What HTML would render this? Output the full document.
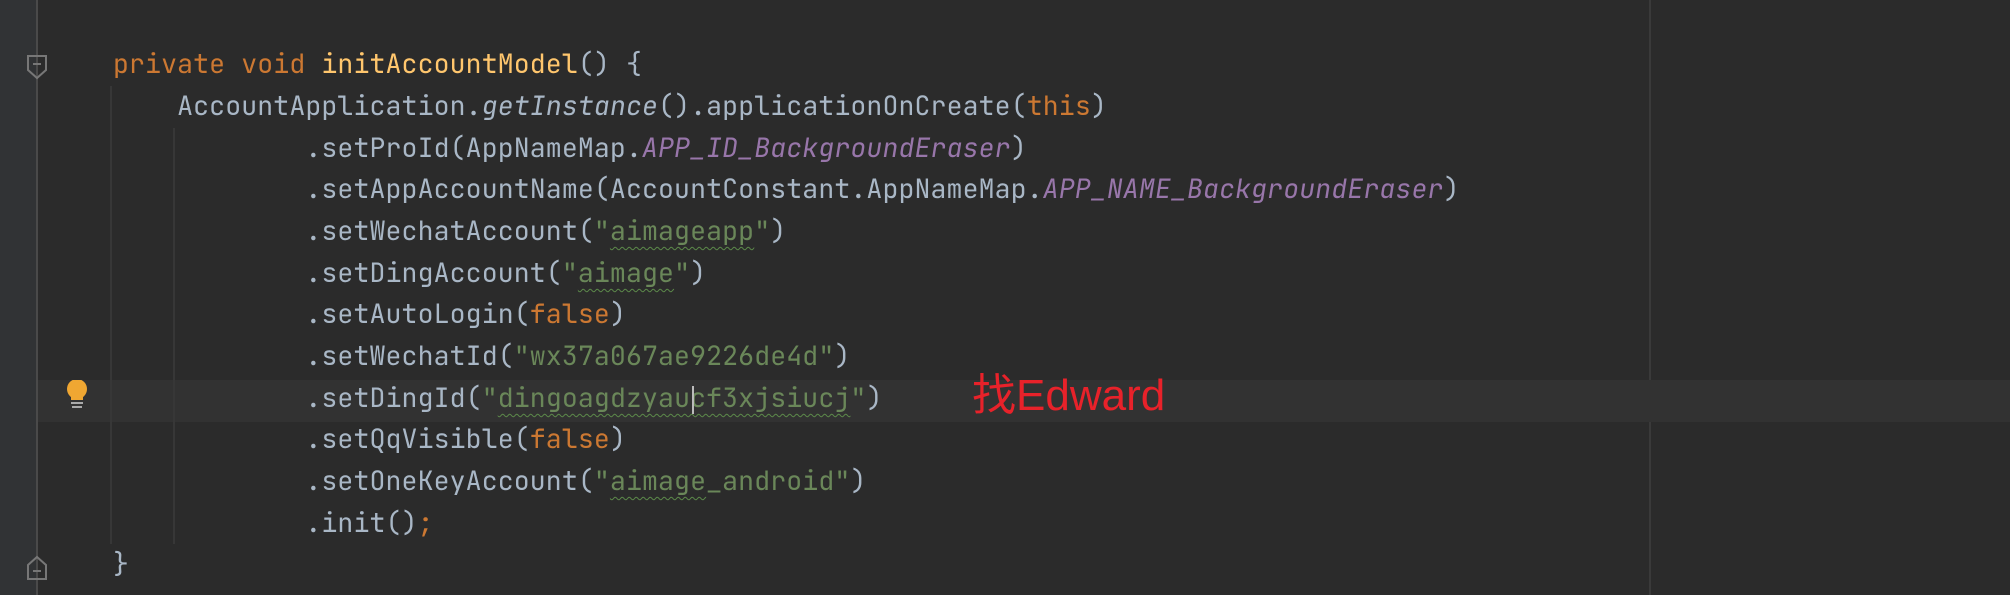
<!DOCTYPE html>
<html><head><meta charset="utf-8"><style>
body{margin:0;width:2010px;height:595px;background:#2b2b2b;overflow:hidden;position:relative;font-family:"JetBrains Mono","Liberation Mono",monospace;}
#gut{position:absolute;left:0;top:0;width:36px;height:595px;background:#313335;}
#gl{position:absolute;left:36px;top:0;width:2px;height:595px;background:#4a4a4a;}
#rm{position:absolute;left:1649px;top:0;width:2px;height:595px;background:#3a3a3a;}
#hl{position:absolute;left:38px;top:380px;width:1972px;height:42px;background:#323232;}
.ig{position:absolute;width:2px;background:#373737;}
.ln{position:absolute;left:113px;height:42px;line-height:42px;font-size:26.5px;color:#a9b7c6;white-space:pre;letter-spacing:0.13px;}
.k{color:#cc7832}.f{color:#ffc66d}.i{font-style:italic}.p{color:#9876aa;font-style:italic}.s{color:#6a8759}
.w{text-decoration:underline wavy #5c8a4a;text-decoration-thickness:1px;text-underline-offset:6px;}
#red{position:absolute;left:972px;top:371px;font-family:"Liberation Sans","Noto Sans CJK SC",sans-serif;font-size:44px;color:#e8222a;line-height:50px;}
</style></head><body>
<div id="gut"></div><div id="gl"></div><div id="rm"></div><div id="hl"></div>
<div class="ig" style="left:110px;top:86px;height:458px"></div>
<div class="ig" style="left:173px;top:128px;height:416px"></div>
<svg style="position:absolute;left:26px;top:54px" width="22" height="26"><path d="M2 2H20V16L11 24L2 16Z" fill="none" stroke="#777" stroke-width="2"/><path d="M7 10H15" stroke="#777" stroke-width="2"/></svg>
<svg style="position:absolute;left:26px;top:555px" width="22" height="26"><path d="M2 24H20V10L11 2L2 10Z" fill="none" stroke="#777" stroke-width="2"/><path d="M7 16H15" stroke="#777" stroke-width="2"/></svg>
<svg style="position:absolute;left:66px;top:380px" width="22" height="30"><circle cx="11" cy="9" r="10" fill="#f0a732"/><rect x="5" y="12" width="12" height="8" fill="#f0a732"/><rect x="5" y="22" width="12" height="2" fill="#aaa"/><rect x="6" y="26" width="10" height="2" fill="#aaa"/></svg>
<div class="ln" style="top:43px"><span class="k">private void </span><span class="f">initAccountModel</span>() {</div>
<div class="ln" style="top:85px">    AccountApplication.<span class="i">getInstance</span>().applicationOnCreate(<span class="k">this</span>)</div>
<div class="ln" style="top:127px">            .setProId(AppNameMap.<span class="p">APP_ID_BackgroundEraser</span>)</div>
<div class="ln" style="top:168px">            .setAppAccountName(AccountConstant.AppNameMap.<span class="p">APP_NAME_BackgroundEraser</span>)</div>
<div class="ln" style="top:210px">            .setWechatAccount(<span class="s">"<span class="w">aimageapp</span>"</span>)</div>
<div class="ln" style="top:252px">            .setDingAccount(<span class="s">"<span class="w">aimage</span>"</span>)</div>
<div class="ln" style="top:293px">            .setAutoLogin(<span class="k">false</span>)</div>
<div class="ln" style="top:335px">            .setWechatId(<span class="s">"wx37a067ae9226de4d"</span>)</div>
<div class="ln" style="top:377px">            .setDingId(<span class="s">"<span class="w">dingoagdzyaucf3xjsiucj</span>"</span>)</div>
<div class="ln" style="top:418px">            .setQqVisible(<span class="k">false</span>)</div>
<div class="ln" style="top:460px">            .setOneKeyAccount(<span class="s">"<span class="w">aimage</span>_android"</span>)</div>
<div class="ln" style="top:502px">            .init()<span class="k">;</span></div>
<div class="ln" style="top:543px">}</div>
<div style="position:absolute;left:692px;top:386px;width:2px;height:28px;background:#bbb"></div>
<div id="red">找Edward</div>
</body></html>
